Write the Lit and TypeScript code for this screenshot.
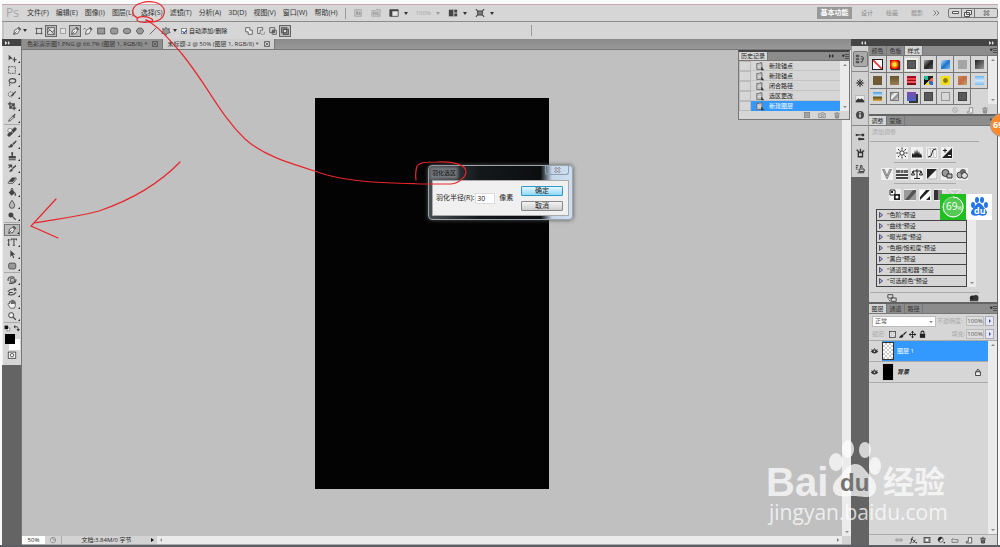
import { LitElement, html, svg, css, TemplateResult, SVGTemplateResult } from 'lit';
import { customElement, property, state } from 'lit/decorators.js';
import { classMap } from 'lit/directives/class-map.js';

// Glyphs share a 12 x 12 grid; "currentColor" lets the host set the ink.
const GLYPHS: Record<string, SVGTemplateResult> = {
  move: svg`<path d="M2 2v7l2-2h3z" fill="currentColor"/><path d="M9 5v6M6.500 8h5" stroke="currentColor" stroke-width="1.300"/>`,
  marquee: svg`<rect x="2" y="2" width="8" height="8" fill="none" stroke="currentColor" stroke-dasharray="2 1"/>`,
  lasso: svg`<ellipse cx="6.500" cy="4.500" rx="4" ry="2.600" fill="none" stroke="currentColor" stroke-width="1.300"/><path d="M3 6.500C2 8 4 8 3.500 9.500L2.500 11" fill="none" stroke="currentColor"/>`,
  quick: svg`<circle cx="4.500" cy="6.500" r="3" fill="none" stroke="currentColor" stroke-dasharray="1.500 1"/><path d="M10.500 2L7 5.500 4 8.500l3-.5 3.500-4z" fill="currentColor"/>`,
  crop: svg`<path d="M3.500 1v7.500H11M1 3.500h7.500V11M4 8l5-5" fill="none" stroke="currentColor" stroke-width="1.500"/>`,
  dropper: svg`<path d="M2 10l1-2.500 3.500-3.500 1.500 1.500L4.500 9z" fill="none" stroke="currentColor"/><path d="M6 3l3 3 1-1.500L8.500 4 10.500 1.500 9 1 7.500 3z" fill="currentColor"/>`,
  heal: svg`<path d="M2.500 9.500l7-7" stroke="currentColor" stroke-width="4" stroke-linecap="round"/><path d="M5 4.500L7.500 7" stroke="#ddd" stroke-width="1"/><circle cx="3.500" cy="4" r="2.500" fill="#eee" stroke="currentColor" stroke-width=".6"/>`,
  brush: svg`<path d="M11 1.500L6.500 5.500l1.300 1.600L11.500 3zM6 6C3.500 6 4 8.500 1 9.500c3 1.600 6 .5 6.300-2z" fill="currentColor"/>`,
  stamp: svg`<path d="M5 1.500h2.500L7 6h3.500v3H2V6h3.500zM2 10h8.500v1H2z" fill="currentColor"/>`,
  history: svg`<path d="M10.500 2L6 6l1 1.500L11 4zM6 7C4.500 7 4 9.500 2 10c2.500 1 5 0 5-2z" fill="currentColor"/><path d="M1.500 2.500h4v3M5 2.500L2 6" fill="none" stroke="currentColor" stroke-width="1.300"/>`,
  eraser: svg`<path d="M1.500 8L6 3h5L7 8.500z" fill="currentColor"/><path d="M1.500 8.500V10H7l4-5V3.500" fill="none" stroke="currentColor"/>`,
  bucket: svg`<path d="M2 6.500L6 3l4 4-4.500 3.500z" fill="currentColor"/><path d="M5 7V2.500Q6 0 7 2.500V5" fill="none" stroke="currentColor"/><path d="M10 7q2 3 0 3.500T10 7" fill="currentColor"/>`,
  blur: svg`<path d="M6 1.500Q2.500 6 2.800 8a3.200 3.200 0 0 0 6.400 0Q9.500 6 6 1.500z" fill="#b8b8b8" stroke="currentColor"/>`,
  dodge: svg`<circle cx="4.700" cy="4.700" r="3" fill="currentColor"/><path d="M7 7l3.500 3.500" stroke="currentColor" stroke-width="1.500"/>`,
  pen: svg`<path d="M2 10l1-5 4-2 2 2-2 4zM2 10l3.500-3.500" fill="#eee" stroke="currentColor"/><path d="M7.500 1.500l3 3" stroke="currentColor" stroke-width="2"/>`,
  freepen: svg`<path d="M3 10l1-5 4-2 1.500 2-2 4zM1 4q1-3 2 0" fill="#eee" stroke="currentColor"/><path d="M8 1.500l3 3" stroke="currentColor" stroke-width="1.500"/>`,
  type: svg`<path d="M5 2.500h6.500M8.300 2.500v7M7 10h2.500M5 2v2M11.500 2v2M2 3v7M1 4l1-1.500L3 4M1 9l1 1.500L3 9" fill="none" stroke="currentColor" stroke-width="1.200"/>`,
  select: svg`<path d="M4 1.500v8l2-2 1.500 3.500 1.200-.6L7.200 7H10z" fill="currentColor"/>`,
  rrect: svg`<rect x="2" y="2.500" width="8.500" height="7" rx="2" fill="#999" stroke="currentColor"/>`,
  rect: svg`<rect x="2" y="2.500" width="8.500" height="7" fill="#999" stroke="currentColor"/>`,
  ellipse: svg`<ellipse cx="6" cy="6" rx="4.500" ry="3.300" fill="#999" stroke="currentColor"/>`,
  polygon: svg`<path d="M4 2.500h4L10.500 6 8 9.500H4L1.500 6z" fill="#999" stroke="currentColor"/>`,
  line: svg`<path d="M2 10l8-8" stroke="currentColor"/>`,
  custom: svg`<path d="M6 1.500L8 4l2-1-.5 3 1.500 2-3 .5L6 11 4.500 8.500 1 9l1.500-3L2 3l2.500 1z" fill="#999" stroke="currentColor"/>`,
  orbit: svg`<rect x="4" y="4" width="5" height="4.500" rx="1" fill="#bbb" stroke="currentColor"/><path d="M1.500 7C0 3 5 1 9 3M10.500 5c1.500 4-4 6-8 4.500" fill="none" stroke="currentColor" stroke-width="1.300"/>`,
  roll: svg`<path d="M1 5.500Q5 1 10.500 3L9 1M10.500 3L8.500 4.500M11 6.500Q7 11 2 9l1-2.500h4" fill="none" stroke="currentColor" stroke-width="1.300"/>`,
  hand: svg`<path d="M3 6L2 5 1 6l3 5h5l1-3V3.500L8.500 3V6 2H7v4V1.500H5.500V6L4 2.500 3 3z" fill="#f0f0f0" stroke="currentColor" stroke-width=".9"/>`,
  zoom: svg`<circle cx="5" cy="5" r="3" fill="#eee" stroke="currentColor" stroke-width="1.200"/><path d="M7.300 7.300l3.200 3.200" stroke="currentColor" stroke-width="1.500"/>`,
  mask: svg`<rect x="1.500" y="2.500" width="9" height="7.500" fill="#eee" stroke="currentColor"/><circle cx="6" cy="6.200" r="2" fill="#fff" stroke="currentColor"/>`,
  shapeLayer: svg`<rect x="3" y="3" width="6" height="6" fill="none" stroke="currentColor"/><path d="M2 2h2v2H2zM8 2h2v2H8zM2 8h2v2H2zM8 8h2v2H8z" fill="currentColor"/>`,
  pathMode: svg`<rect x="2" y="2" width="8" height="8" fill="#ddd" stroke="currentColor"/><path d="M2 8q2-5 4-2t4-1M2 2l8 8" fill="none" stroke="currentColor"/>`,
  fillMode: svg`<rect x="3" y="3" width="6" height="6" fill="#e2e2e2" stroke="#999"/>`,
  union: svg`<path d="M2 2h5v3h3v5H5V7H2z" fill="#eee" stroke="currentColor"/>`,
  subtract: svg`<path d="M2 2h6v3H5v4H2z" fill="#eee" stroke="currentColor"/><path d="M6 10h4V6" fill="none" stroke="currentColor" stroke-dasharray="1 1"/>`,
  intersect: svg`<path d="M2 2h6v6H2zM5 5h5v5H5z" fill="none" stroke="currentColor"/><path d="M5 5h3v3H5z" fill="currentColor"/>`,
  exclude: svg`<path d="M2 2h6v6H2zM4 4h6v6H4z" fill="#aaa" stroke="currentColor" stroke-width="1.300"/><path d="M5 5h2v2H5z" fill="#fff"/>`,
  bridge: svg`<rect x="2" y="2" width="8" height="8" fill="#c4c4c4" stroke="#aaa"/><path d="M4 4h2v4H4zM7 5h2v3H7z" fill="#999"/>`,
  mini: svg`<path d="M1 3h4l1-1h5v8H1z" fill="#c4c4c4" stroke="#aaa"/><path d="M3 8V5l1.500 2L6 5v3M8 5v3h1.500" fill="none" stroke="#999"/>`,
  screen: svg`<path d="M1 2h10v8H1z" fill="#e6e6e6" stroke="currentColor"/><path d="M1 2h10v2H1zM1 2h3v8H1z" fill="currentColor"/>`,
  arrange: svg`<path d="M1 2h10v8H1z" fill="currentColor"/><path d="M7 2v8M7 6h4" stroke="#ddd"/>`,
  full: svg`<rect x="3" y="3.500" width="6" height="5" fill="#777" stroke="currentColor"/><path d="M1 1.500l2 2M11 1.500l-2 2M1 10.500l2-2M11 10.500l-2-2" stroke="currentColor" stroke-width="1.300"/>`,
  doc: svg`<path d="M1 2h3l1-1h3v9H1z" fill="#aaa" stroke="#666"/><path d="M2 4h5M2 6h5M2 8h5" stroke="#eee"/><path d="M7 6l4 5H7z" fill="#333"/>`,
  camera: svg`<path d="M1 4h3l1-1.500h3L9 4h2v6H1z" fill="#ccc" stroke="currentColor"/><circle cx="6.500" cy="6.700" r="1.700" fill="none" stroke="currentColor"/>`,
  trash: svg`<path d="M2 3.500h8M5 2h2M3.200 4.500l.6 6h4.400l.6-6M5 5v5M7 5v5" fill="none" stroke="currentColor" stroke-width="1.200"/>`,
  newdoc: svg`<path d="M2 10.500v-2h3v-6h5v8z" fill="#eee" stroke="currentColor"/>`,
  list: svg`<rect x="2" y="2" width="8" height="8" fill="#bbb" stroke="currentColor"/><path d="M3 4.500h6M3 7h6" stroke="currentColor"/>`,
  none: svg`<circle cx="6" cy="6" r="3.600" fill="none" stroke="#999"/><path d="M3.500 3.500l5 5" stroke="#999"/>`,
  histPanel: svg`<path d="M1 1h4v3H1zM1 5h4v2.500H1zM1 8.500h4V11H1z" fill="#555"/><path d="M7 3q4 0 3 3L8 10M6.500 9.500h2M7 6h3" fill="none" stroke="#333"/>`,
  wheel: svg`<circle cx="6" cy="6" r="2.600" fill="none" stroke="currentColor"/><path d="M6 1v10M1 6h10M2.500 2.500l7 7M9.500 2.500l-7 7" stroke="currentColor"/>`,
  picture: svg`<rect x="1" y="2" width="10" height="8" fill="#eee" stroke="#999" stroke-width=".6"/><path d="M1 8l3-3 2 1.500L8 5l3 3v2H1z" fill="currentColor"/>`,
  info: svg`<circle cx="6" cy="6" r="4.800" fill="#4a4a4a"/><path d="M6 5v4" stroke="#fff" stroke-width="1.500"/><circle cx="6" cy="3.200" r=".9" fill="#fff"/>`,
  brushes: svg`<path d="M1 3.500h8M4 8.500h7" stroke="currentColor" stroke-width="1.200"/><path d="M1 2l4 1.500L1 5zM8 2h3v3H8zM4 7h3v3H4zM7 7.500h4v2H7z" fill="currentColor"/>`,
  source: svg`<path d="M4 5.500h5v5H4zM5 5L2 2M6.500 5V1M8 5l3-2" fill="none" stroke="currentColor" stroke-width="1.600"/>`,
  clone: svg`<path d="M6.500 5V2h2v3M5 6h6v3H5zM3 10.500h8M1 2h3M1 4h2M1 6h2" fill="none" stroke="currentColor" stroke-width="1.100"/>`,
  bright: svg`<circle cx="6" cy="6" r="2.200" fill="#fff" stroke="#222"/><path d="M6 .5v2M6 9.500v2M.5 6h2M9.500 6h2M2 2l1.500 1.500M8.500 8.500L10 10M2 10l1.500-1.500M8.500 3.500L10 2" stroke="#222"/>`,
  levels: svg`<path d="M1 10V7l1-1 1 2 1-5 1 4 1-5 1 5 1-3 1 4 1-2 1 4z" fill="#222"/><path d="M1 10h10" stroke="#222"/>`,
  curves: svg`<path d="M1.500 1.500h9v9h-9zM4.500 1.500v9M7.500 1.500v9" fill="none" stroke="#bbb" stroke-width=".7"/><path d="M2 10q4 0 4-4t4-4" fill="none" stroke="#222"/>`,
  expo: svg`<path d="M11 1v10H1z" fill="#222"/><path d="M2 3.500h4M4 1.500v4" stroke="#222"/><path d="M7 8.500h3" stroke="#fff"/>`,
  vib: svg`<path d="M1.500 1.500h2L6 8l2.500-6.500h2L6 11z" fill="#bbb" stroke="#666" stroke-width=".7"/>`,
  hue: svg`<path d="M0 2h4v3H0zM4.500 2h3v3h-3zM8 2h4v3H8z" fill="#666"/><path d="M0 6h12v2H0zM0 9h12v2H0z" fill="#444"/>`,
  balance: svg`<path d="M6 1v9M3 10.500h6M2 3h8M2 3L.5 7h3zM10 3L8.500 7h3z" fill="none" stroke="#222"/>`,
  bw: svg`<path d="M1 1h10L1 11z" fill="#222"/><path d="M11 1v10H1" fill="none" stroke="#aaa"/>`,
  filter: svg`<circle cx="4.500" cy="5" r="3.500" fill="#999" stroke="#333"/><path d="M6 6h5v4H6z" fill="#bbb" stroke="#333"/>`,
  mixer: svg`<circle cx="4" cy="7" r="3" fill="#aaa" stroke="#444"/><circle cx="7" cy="4" r="3" fill="#666"/><circle cx="8.500" cy="7.500" r="3" fill="#ddd" stroke="#333"/>`,
  invert: svg`<path d="M1 1h5v5H1z" fill="#fff" stroke="#222"/><path d="M5 5h6v6H5zM2 2h2v2H2z" fill="#222"/><circle cx="8" cy="8" r="1.500" fill="#fff"/>`,
  poster: svg`<path d="M0 1h12v10H0z" fill="#999"/><path d="M1 11L9 1h3v2L5 11z" fill="#555"/>`,
  thresh: svg`<path d="M1 1h10v10H1z" fill="#fff"/><path d="M1 11V8l6-7h4zM7 11l4-4v4z" fill="#222"/>`,
  gmap: svg`<path d="M0 1h4v10H0z" fill="#333"/><path d="M4 1h4v10H4z" fill="#888"/><path d="M8 1h4v10H8z" fill="#ddd"/>`,
  selcol: svg`<path d="M0 1h12v10H0z" fill="#ccc"/><path d="M0 1l6 5 6-5M0 11l6-5 6 5" fill="none" stroke="#eee"/>`,
  eye: svg`<path d="M1 6q5-6 10 0-5 5-10 0z" fill="#333"/><circle cx="6" cy="5.500" r="1" fill="#eee"/><path d="M2 3l1 1M6 1.500V3M10 3L9 4" stroke="#333"/>`,
  lock: svg`<rect x="2.500" y="5" width="7" height="5.500" fill="#eee" stroke="#222" stroke-width="1.200"/><path d="M4 5V3.500a2 2 0 0 1 4 0V5" fill="none" stroke="#222" stroke-width="1.200"/>`,
  lockFull: svg`<rect x="2.500" y="5" width="7" height="5.500" fill="#222"/><path d="M4 5V3.500a2 2 0 0 1 4 0V5" fill="none" stroke="#222" stroke-width="1.400"/>`,
  lockPix: svg`<rect x="2" y="2" width="8" height="8" fill="#eee" stroke="#333"/><path d="M3 3h2v2H3zM7 3h2v2H7zM5 5h2v2H5zM3 7h2v2H3zM7 7h2v2H7z" fill="#bbb"/>`,
  cross: svg`<path d="M6 1.500v9M1.500 6h9" stroke="#222" stroke-width="1.200"/><path d="M4 3.500L6 1l2 2.500zM4 8.500L6 11l2-2.500zM3.500 4L1 6l2.500 2zM8.500 4L11 6 8.500 8z" fill="#222"/>`,
  link: svg`<path d="M5 4.500H2.500a1.500 1.500 0 0 0 0 3H5M7 4.500h2.500a1.500 1.500 0 0 1 0 3H7M4 6h4" fill="none" stroke="#777"/>`,
  half: svg`<circle cx="5.500" cy="5.500" r="3.800" fill="#eee" stroke="#222"/><path d="M2.800 8.200l5.400-5.400A3.800 3.800 0 0 0 2.800 8.200z" fill="#222"/><path d="M10 9h2v2h-2z" fill="#222"/>`,
  folder: svg`<path d="M1.500 9.500v-5h3l1 1h5v4z" fill="#ddd" stroke="#555"/>`,
  addmask: svg`<rect x="1.500" y="2" width="9" height="8" fill="#999" stroke="#333"/><circle cx="6" cy="6" r="2" fill="#fff"/>`,
  fx: svg`<path d="M1 11q2 1 2.500-3L4.500 3q.5-2 2-1.300M2.500 5H6M6 5.500l4 5M10 5.500l-4.500 5" fill="none" stroke="#222" stroke-width="1.200"/><path d="M10.500 9.500h1.500V11h-1.500z" fill="#222"/>`,
  swap: svg`<path d="M5 5h5v5H5z" fill="#fff" stroke="#555"/><path d="M1 1h6v6H1z" fill="#111"/>`,
  bend: svg`<path d="M2 3h5q2 0 2 5" fill="none" stroke="#333" stroke-width="1.400"/><path d="M4 0v6L1 3zM6 7h6l-3 4z" fill="#333"/>`,
  clip: svg`<circle cx="4" cy="6" r="3" fill="#222"/><circle cx="8" cy="6" r="3.500" fill="#333"/><path d="M1 8h10v2H1z" fill="#444"/>`,
  back: svg`<path d="M1 2h6v4H1zM5 6h6v4H5z" fill="#ddd" stroke="#333"/><path d="M2 8l2 2" stroke="#333"/>`,
  clock: svg`<circle cx="6" cy="6" r="4" fill="#ddd" stroke="#777"/><path d="M6 3v3h3" fill="none" stroke="#777"/>`,
};

@customElement('ps-icon')
class PsIcon extends LitElement {
  @property() name = '';
  static styles = css`
    :host { display: block; width: 10px; height: 10px; flex: none; }
    .glyph { display: block; width: 100%; height: 100%; }
  `;
  render() {
    return html`<svg class="glyph" viewBox="0 0 12 12" aria-hidden="true">${GLYPHS[this.name]}</svg>`;
  }
}

const MENUS = ['文件(F)', '编辑(E)', '图像(I)', '图层(L)', '选择(S)', '滤镜(T)', '分析(A)', '3D(D)', '视图(V)', '窗口(W)', '帮助(H)'];
const TOOL_GROUPS = [
  ['move', 'marquee', 'lasso', 'quick', 'crop', 'dropper'],
  ['heal', 'brush', 'stamp', 'history', 'eraser', 'bucket', 'blur', 'dodge'],
  ['pen', 'type', 'select', 'rrect'],
  ['orbit', 'roll', 'hand', 'zoom'],
];
const HISTORY = ['新建锚点', '新建锚点', '闭合路径', '选区更改', '新建图层'];
const PRESETS = ['色阶', '曲线', '曝光度', '色相/饱和度', '黑白', '通道混和器', '可选颜色'];
const STYLES = ['s-none', 's-sun', 's-gray s-on', 's-dark', 's-blue', 's-silver', 's-fade', 's-brown', 's-brown2', 's-red', 's-camo', 's-yellow', 's-rust', 's-sky', 's-land', 's-chrome', 's-violet', 's-gray', 's-line', 's-gray'];

@customElement('app-root')
class AppRoot extends LitElement {
  @state() private tool = 'pen';
  @state() private step = 4;

  static styles = css`
    * { box-sizing: border-box; }
    :host {
      display: block; position: relative; overflow: hidden; min-height: 100vh;
      font: 6px/8px "Open Sans", "Noto Sans CJK SC", sans-serif; color: #222;
    }
    button, input, select { font: inherit; color: inherit; margin: 0; padding: 0; border: 0; background: none; border-radius: 0; appearance: none; outline: none; }
    button { display: flex; align-items: center; justify-content: center; white-space: nowrap; }
    .app { display: flex; flex-direction: column; min-height: 100vh; padding: 4px 2px 0; border-bottom: 2px solid #5d5d68; background: #fbfafa; }
    .row { display: flex; align-items: center; }
    .grow { flex: 1; }
    .caret { width: 0; border: 2px solid transparent; border-top: 3px solid #333; border-bottom: 0; flex: none; }
    .pale { opacity: .35; }

    .menubar { height: 18px; padding: 0 0 0 4px; background: #d6d6d6; border-top: 1px solid #c9a9b0; border-bottom: 1px solid #8c8c8c; }
    .logo { font: 12px/16px "Open Sans", sans-serif; color: #a5a5a5; width: 21px; }
    .menus { display: flex; gap: 7px; margin-right: 7px; }
    .menus button { font-size: 7px; color: #333; }
    .vline { width: 1px; height: 11px; background: #999; flex: none; }
    .apps { gap: 8px; margin-left: 7px; color: #444; }
    .pair { gap: 5px; }
    .spaces { gap: 13px; color: #888; margin-right: 8px; }
    .spaces svg { margin-left: -3px; }
    .spaces .now { background: #999; color: #fff; font-weight: 700; height: 12px; width: 35px; margin-right: -4px; font-size: 7px; }
    .win { border: 1px solid #777; border-radius: 2px; height: 10px; }
    .win button { width: 13px; height: 8px; border-right: 1px solid #777; color: #555; }
    .win button:last-child { width: 22px; border: 0; }

    .options { height: 17px; padding: 0 9px 0 7px; background: #d6d6d6; color: #555; border-left: 2px solid #c4c4c4; border-right: 1px solid #999; }
    .kinds { margin-left: 6px; }
    .shapes { gap: 1px; }
    .rule { margin-left: 240px; }
    .opt { width: 12px; height: 12px; }
    .opt.on { background: #bcbcbc; border: 1px solid #666; }
    .check { display: flex; align-items: center; gap: 2px; margin: 0 16px 0 4px; color: #222; }
    .check input { width: 6px; height: 6px; background: #fff; border: 1px solid #888; display: grid; place-items: center; }
    .check input:checked::before { content: ""; width: 2px; height: 3px; border: solid #2352a0; border-width: 0 1px 1px 0; transform: rotate(40deg); }

    .work { flex: 1; display: grid; grid-template-columns: 20px 1fr 18px 129px; background: #646464; min-height: 0; }
    .dark { height: 7px; background: #444; color: #ddd; display: flex; align-items: center; padding: 0 3px; }
    .dark svg { width: 5px; height: 4px; display: block; }
    .dark.end { justify-content: flex-end; }

    .toolside { border-right: 1px solid #777; }
    .tools { background: #d6d6d6; padding: 6px 1px 4px; display: flex; flex-direction: column; height: 319px; border-left: 1px solid #eee; color: #444; }
    .group { border-bottom: 1px solid #aaa; margin-bottom: 1px; }
    .group:last-of-type { border-bottom-color: #d6d6d6; }
    .tool { width: 16px; height: 12px; position: relative; }
    .tool::after { content: ""; position: absolute; right: 0; bottom: 1px; border: 1px solid transparent; border-right-color: #222; border-bottom-color: #222; }
    .tool.on { background: #bbb; border: 1px solid #777; }
    .mini { justify-content: space-between; height: 9px; }
    .mini ps-icon { width: 7px; height: 7px; }
    .colors { height: 17px; padding: 1px 1px 0; display: grid; grid-template-columns: 10px 6px; }
    .fore { background: #000; width: 10px; height: 10px; z-index: 1; }
    .back { background: #fff; width: 11px; height: 11px; margin: 5px 0 0 -6px; }

    .docside { display: flex; flex-direction: column; min-width: 0; background: #c0c0c0; }
    .tabs { display: flex; height: 11px; background: linear-gradient(#8a8a8a, #999); border-bottom: 1px solid #777; padding-left: 1px; }
    .tab { padding: 0 4px; gap: 5px; color: #333; background: #8e8e8e; border-right: 1px solid #777; }
    .tab.on { background: #d0d0d0; }
    .tab svg { width: 6px; height: 6px; }
    .canvas { flex: 1; display: grid; grid-template-columns: 1fr 9px; }
    .stage { display: grid; place-items: center; }
    .sheet { width: 234px; height: 391px; background: #030303; }
    .bar { background: #ebebeb; display: flex; flex-direction: column; justify-content: space-between; align-items: center; padding: 3px 0; }
    .up, .down { width: 0; border: 2px solid transparent; }
    .up { border-bottom: 2px solid #888; border-top: 0; }
    .down { border-top: 2px solid #888; border-bottom: 0; }
    .status { height: 9px; background: #d3d3d3; border-bottom: 1px solid #aaa; }
    .status .zoomin { width: 23px; height: 8px; background: #fff; text-align: center; }
    .status ps-icon { width: 8px; height: 8px; margin: 0 4px; }
    .status .size { width: 90px; text-align: center; border-left: 1px solid #aaa; }
    .right { width: 0; border: 2px solid transparent; border-left: 3px solid #111; border-right: 0; }
    .left { width: 0; border: 2px solid transparent; border-right: 2px solid #999; border-left: 0; }
    .hbar { flex: 1; height: 8px; background: #ebebeb; margin: 0 9px 0 3px; display: flex; justify-content: space-between; align-items: center; padding: 0 3px; }
    .hbar .right { border-left: 2px solid #777; }

    .dock .icons { background: #d0d0d0; border: 1px solid #999; border-width: 0 1px; padding: 5px 0 4px; height: 131px; }
    .dock section { display: flex; flex-direction: column; align-items: center; gap: 3px; padding-bottom: 4px; border-bottom: 1px solid #888; margin-bottom: 4px; }
    .dock section:last-child { border: 0; margin: 0; padding: 0; }
    .dock button { width: 15px; height: 13px; color: #333; }
    .dock button.on { height: 16px; background: #aaa; border: 1px solid #777; border-radius: 2px; }

    .panels { display: flex; flex-direction: column; padding: 0 1px 0 0; gap: 2px; }
    .panels .dark { margin-bottom: -2px; }
    .panel { background: #d6d6d6; display: flex; flex-direction: column; }
    .ptabs { display: flex; height: 10px; background: #8c8c8c; border-bottom: 1px solid #777; align-items: stretch; }
    .ptabs button { width: 18px; color: #333; border-right: 1px solid #777; }
    .ptabs button.on { background: #d6d6d6; color: #222; }
    .ptabs .opts { width: 8px; border: 0; margin-left: auto; }
    .opts svg { width: 7px; height: 5px; }
    .swatches { display: grid; grid-template-columns: 1fr 9px; padding-left: 1px; }
    .grid { display: grid; grid-template-columns: repeat(7, 1fr); grid-auto-rows: 16px; }
    .cell { border: solid #777; border-width: 0 1px 1px 0; height: 17px; }
    .chip { width: 9px; height: 9px; display: block; }
    .s-none { background: linear-gradient(to top right, #fff 43%, #e33 45%, #e33 55%, #fff 57%); border: 1px solid #222; width: 11px; height: 11px; transform: scaleX(1); background: linear-gradient(to bottom left, #fff 43%, #e33 45%, #e33 55%, #fff 57%); }
    .s-sun { background: radial-gradient(#ffe640 20%, #f70 45%, #c00 75%); box-shadow: 1px 1px 1px #333; }
    .s-gray { background: #595959; border: 1px solid #444; }
    .s-on { box-shadow: 0 0 0 2px #eeeee4; }
    .s-dark { background: linear-gradient(135deg, #aaa, #222 50%, #555); }
    .s-blue { background: linear-gradient(135deg, #bfe0ff, #1d74c8 50%, #74b9f2); }
    .s-silver { background: #a5a5a5; }
    .s-fade { background: linear-gradient(135deg, #222, #999); }
    .s-brown { background: #6e5a35; }
    .s-brown2 { background: linear-gradient(#65502a, #9a8050); }
    .s-red { background: linear-gradient(#a01020 25%, #f43c48 25% 45%, #901018 45% 60%, #f0505a 60% 80%, #701018 80%); }
    .s-camo { background: conic-gradient(#222 15%, #e64 15% 30%, #2a6be0 30% 45%, #f4d31e 45% 62%, #111 62% 80%, #2b9 80%); }
    .s-yellow { background: radial-gradient(#8a7a10 30%, #f1df16 45%); }
    .s-rust { background: linear-gradient(135deg, #c58a40, #c9684c 50%, #b7b060); }
    .s-sky { background: linear-gradient(#6ab4f0, #cde6fa 50%, #7dbcf0); }
    .s-land { background: linear-gradient(#4a9be0, #cfe8fa 45%, #5a4a1c 55%, #e0a838); }
    .s-chrome { background: linear-gradient(135deg, #777, #fff 40%, #888 60%, #ddd); border: 1px solid #777; }
    .s-violet { background: linear-gradient(#7b4ea8, #4a62c4); box-shadow: 2px 2px 0 #333; }
    .s-line { border: 1px solid #999; }
    .pfoot { display: flex; height: 8px; justify-content: flex-end; gap: 7px; padding-right: 8px; color: #777; align-items: center; }
    .panel .pfoot { height: 10px; padding-top: 2px; }
    .pfoot ps-icon { width: 8px; height: 8px; }

    .adjust { padding: 2px 18px 0 1px; }
    .hint { color: #aaa; padding: 0 2px 5px; border-bottom: 1px solid #aaa; }
    .adj { display: flex; justify-content: center; gap: 3px; padding: 5px 0 3px; }
    .adj ps-icon { width: 12px; height: 12px; background: #f0f0f0; }
    .short { width: 62px; height: 1px; background: #aaa; margin: 0 auto; }
    .presets { display: grid; grid-template-columns: 1fr 9px; padding: 5px 3px 5px 6px; border-bottom: 1px solid #aaa; }
    .plist { list-style: none; margin: 0; padding: 0; border: 1px solid #444; border-bottom: 0; }
    .plist li { border-bottom: 1px solid #444; height: 11px; }
    .plist button { height: 10px; gap: 4px; padding-left: 2px; }
    .tri { width: 4px; height: 6px; display: block; }
    .afoot { display: flex; justify-content: space-between; padding: 0 18px; height: 9px; align-items: center; color: #333; }

    .layers { flex: 1; }
    .layers .set { height: 14px; padding: 0 3px; gap: 1px; color: #aaa; }
    .layers .set.low { height: 13px; border-bottom: 1px solid #aaa; }
    .locks { gap: 1px; margin-left: 1px; color: #222; }
    .locks ps-icon { width: 9px; height: 9px; }
    .sel { width: 64px; height: 11px; background: #fff; border: 1px solid #bbb; color: #555; padding-left: 2px; }
    .drop { position: relative; display: block; }
    .drop .down { position: absolute; right: 3px; top: 5px; }
    .set label { white-space: nowrap; }
    .num { width: 18px; height: 10px; border: 1px solid #bbb; color: #555; background: #ddd; text-align: center; }
    .step { width: 9px; height: 10px; border: 1px solid #aab; background: #e6e8f2; flex: none; }
    .step .right { border-left: 2px solid #3a55b0; }
    .stack { flex: 1; display: grid; grid-template-columns: 1fr 9px; }
    .layer { height: 21px; border-bottom: 1px solid #aaa; padding-left: 1px; width: 100%; justify-content: flex-start; }
    .layer ps-icon { width: 9px; height: 9px; margin-right: 3px; }
    .layer .pic { width: 12px; height: 18px; background: #000; border: 1px solid #ccc; }
    .layer.on .pic { background: repeating-conic-gradient(#ccc 0 25%, #fff 0 50%) 0 0/4px 4px; border: 1px solid #333; }
    .layer.on .rest { background: #3399ff; color: #fff; }
    .layer .rest { display: flex; align-items: center; gap: 3px; flex: 1; height: 100%; }
    .layer em { font-weight: 700; }
    .layer .lk { margin: 0 6px 0 auto; width: 8px; }
    .lfoot { display: flex; height: 11px; align-items: center; justify-content: flex-end; gap: 6px; padding-right: 10px; border-top: 1px solid #aaa; }
    .lfoot ps-icon { width: 8px; height: 8px; }

    .hist { position: absolute; left: 738px; top: 50px; width: 112px; background: #d6d6d6; border: 1px solid #777; border-top: 2px solid #444; }
    .hist .ptabs { height: 9px; }
    .hist .ptabs .on { width: 29px; }
    .hist .ffwd { display: grid; place-items: center; margin-left: auto; color: #333; width: 12px; }
    .hist .ffwd svg { width: 5px; height: 4px; }
    .hist .ptabs .opts { margin-left: 4px; }
    .hist .body { display: grid; grid-template-columns: 1fr 9px; height: 50px; overflow: hidden; }
    .steps { list-style: none; margin: 0; padding: 0; }
    .steps li { height: 10px; border-bottom: 1px solid #c4c4c4; display: grid; grid-template-columns: 12px 1fr; }
    .steps button { height: 10px; justify-content: flex-start; gap: 4px; padding-left: 5px; }
    .steps .on { background: #3399ff; color: #fff; }
    .box { border: 1px solid #bbb; }
    .steps ps-icon { width: 9px; height: 9px; }

    .dialog { position: absolute; left: 428px; top: 165px; width: 145px; border: 1px solid #9aa4ad; border-radius: 4px; padding: 0 3px 3px; background: linear-gradient(90deg, #4a4e52, #15181b 35%, #0c0e10 78%, #c5d6ea 86%, #cfdff2); box-shadow: 0 0 4px #555; }
    .dtitle { display: flex; height: 14px; justify-content: space-between; align-items: center; color: #111; }
    .dtitle span { background: #73777b; box-shadow: 0 0 3px 2px #73777b; }
    .dtitle button { width: 24px; height: 9px; border: 1px solid #8fa0b2; border-top: 0; border-radius: 0 0 3px 3px; align-self: flex-start; color: #555; }
    .dbody { display: flex; background: #f0f0f0; height: 36px; padding: 5px 5px 5px 3px; align-items: center; border: 1px solid #aaa; font-size: 7px; }
    .dbody input { width: 20px; height: 11px; background: #fff; border: 1px solid #ddd; margin: 0 4px 0 1px; padding-left: 1px; }
    .dbody span, .dbody label { white-space: nowrap; }
    .acts { display: flex; flex-direction: column; gap: 5px; margin-left: auto; }
    .acts button { width: 42px; height: 10px; border: 1px solid #888; border-radius: 1px; background: linear-gradient(#f4f4f4, #ccc); }
    .acts .ok { border-color: #2a9ac8; background: linear-gradient(#e4f6fd, #8fd8f4); }

    .marks { position: absolute; left: 0; top: 0; width: 1000px; height: 547px; pointer-events: none; }
    .t-wm { font: 700 40px "Liberation Sans", sans-serif; }
    .t-du { font: 700 24px "Liberation Sans", sans-serif; }
    .t-cn { font: 700 31px "Noto Sans CJK SC", sans-serif; }
    .t-url { font: 21px "Open Sans", sans-serif; }
    .t-pct { font: 10px "Open Sans", sans-serif; }
    .t-badge { font: 700 9px "Open Sans", sans-serif; }
    .t-sm { font: 6px "Open Sans", sans-serif; }
  `;

  private arrows(dir: 'l' | 'r') {
    const d = dir === 'r' ? 'M0 0l2.500 2L0 4zM3 0l2 2-2 2z' : 'M2 0L0 2l2 2zM5 0L3 2l2 2z';
    return html`<svg viewBox="0 0 5 4" aria-hidden="true"><path d=${d} fill="currentColor" /></svg>`;
  }

  private panelMenu(): TemplateResult {
    return html`<button class="opts" aria-label="面板菜单"><svg viewBox="0 0 7 5"><path d="M0 1h2.500L1.200 3zM3 .5h4M3 2.500h4M3 4.500h4" fill="#333" stroke="#333" stroke-width=".7" /></svg></button>`;
  }

  private tabs(names: string[], active: number) {
    return html`<div class="ptabs">${names.map((n, i) => html`<button class=${classMap({ on: i === active })}>${n}</button>`)}${this.panelMenu()}</div>`;
  }

  private opt(name: string, on = false) {
    return html`<button class=${classMap({ opt: true, on })} aria-label=${name}><ps-icon name=${name}></ps-icon></button>`;
  }

  private scroll() {
    return html`<div class="bar"><i class="up"></i><i class="down"></i></div>`;
  }

  private closeMark() {
    return html`<svg viewBox="0 0 6 6" aria-hidden="true"><path d="M.5.5h5v5h-5zM1.500 1.500l3 3M4.500 1.500l-3 3" fill="none" stroke="#444" stroke-width=".7" /></svg>`;
  }

  private renderTop() {
    return html`
      <header class="menubar row">
        <span class="logo">Ps</span>
        <nav class="menus">${MENUS.map((m) => html`<button>${m}</button>`)}</nav>
        <i class="vline"></i>
        <div class="apps row">
          <ps-icon name="bridge"></ps-icon><ps-icon name="mini"></ps-icon>
          <span class="row pair"><ps-icon name="screen"></ps-icon><i class="caret"></i></span>
          <span class="row pair pale">100%<i class="caret"></i></span>
          <span class="row pair"><ps-icon name="arrange"></ps-icon><i class="caret"></i></span>
          <span class="row pair"><ps-icon name="full"></ps-icon><i class="caret"></i></span>
        </div>
        <span class="grow"></span>
        <div class="spaces row">
          <button class="now">基本功能</button><button>设计</button><button>绘画</button><button>摄影</button>
          <svg width="7" height="6" viewBox="0 0 7 6"><path d="M.5.5L3 3 .5 5.500M3.500.5L6 3 3.500 5.500" fill="none" stroke="#777" /></svg>
        </div>
        <div class="win row">
          <button aria-label="最小化"><svg width="7" height="4"><path d="M.5.5h6v2h-6z" fill="#fff" stroke="#555" /></svg></button>
          <button aria-label="还原"><svg width="8" height="7"><path d="M2.500.5h5v4h-5zM.5 2.500h5v4h-5z" fill="#eee" stroke="#555" /></svg></button>
          <button aria-label="关闭"><svg width="7" height="6"><path d="M1 .5l5 5M6 .5l-5 5" stroke="#666" stroke-width="2" /><path d="M1 .5l5 5M6 .5l-5 5" stroke="#eee" stroke-width=".7" /></svg></button>
        </div>
      </header>
      <div class="options row">
        <div class="row">${this.opt('pen')}<i class="caret"></i></div>
        <div class="row kinds">${this.opt('shapeLayer')}${this.opt('pathMode', true)}${this.opt('fillMode')}</div>
        <div class="row shapes">${this.opt('pen', true)}${this.opt('freepen')}${['rect', 'rrect', 'ellipse', 'polygon', 'line', 'custom'].map((n) => this.opt(n))}<i class="caret"></i></div>
        <label class="check"><input type="checkbox" checked />自动添加/删除</label>
        <div class="row">${this.opt('union')}${this.opt('subtract')}${this.opt('intersect')}${this.opt('exclude', true)}</div>
        <i class="vline rule"></i>
      </div>`;
  }

  private renderTools() {
    return html`
      <aside class="toolside">
        <div class="dark">${this.arrows('r')}</div>
        <div class="tools">
          ${TOOL_GROUPS.map((g) => html`<div class="group">${g.map((t) => html`
            <button class=${classMap({ tool: true, on: t === this.tool })} aria-label=${t} @click=${() => (this.tool = t)}><ps-icon name=${t}></ps-icon></button>`)}</div>`)}
          <div class="row mini"><ps-icon name="swap"></ps-icon><ps-icon name="bend"></ps-icon></div>
          <div class="colors"><button class="fore" aria-label="前景色"></button><button class="back" aria-label="背景色"></button></div>
          <button aria-label="快速蒙版"><ps-icon name="mask"></ps-icon></button>
        </div>
      </aside>`;
  }

  private renderDocument() {
    return html`
      <main class="docside">
        <div class="tabs">
          <button class="tab">色彩演示图1.PNG @ 66.7% (图层 1, RGB/8) * ${this.closeMark()}</button>
          <button class="tab on">未标题-2 @ 50% (图层 1, RGB/8) * ${this.closeMark()}</button>
        </div>
        <div class="canvas"><div class="stage"><div class="sheet"></div></div>${this.scroll()}</div>
        <footer class="status row">
          <input class="zoomin" aria-label="缩放" value="50%" /><ps-icon name="clock"></ps-icon>
          <span class="size">文档:3.84M/0 字节</span><i class="right"></i>
          <div class="hbar"><i class="left"></i><i class="right"></i></div>
        </footer>
      </main>`;
  }

  private renderDock() {
    const groups = [['histPanel'], ['wheel', 'picture', 'info'], ['brushes', 'source', 'clone']];
    return html`
      <aside class="dock">
        <div class="dark end">${this.arrows('l')}</div>
        <div class="icons">${groups.map((g) => html`<section>${g.map((n) => html`<button class=${classMap({ on: n === 'histPanel' })} aria-label=${n}><ps-icon name=${n}></ps-icon></button>`)}</section>`)}</div>
      </aside>`;
  }

  private adjRow(names: string[]) {
    return html`<div class="adj">${names.map((n) => html`<ps-icon name=${n}></ps-icon>`)}</div>`;
  }

  private renderPanels() {
    return html`
      <aside class="panels">
        <div class="dark end">${this.arrows('r')}</div>
        <section class="panel">
          ${this.tabs(['颜色', '色板', '样式'], 2)}
          <div class="swatches">
            <div class="grid">${STYLES.map((s) => html`<button class="cell" aria-label="样式"><i class="chip ${s}"></i></button>`)}</div>
            ${this.scroll()}
          </div>
          <div class="pfoot"><ps-icon name="none"></ps-icon><ps-icon name="newdoc"></ps-icon><ps-icon name="trash"></ps-icon></div>
        </section>
        <section class="panel">
          ${this.tabs(['调整', '蒙版'], 0)}
          <div class="adjust">
            <div class="hint">添加调整</div>
            ${this.adjRow(['bright', 'levels', 'curves', 'expo'])}
            <div class="short"></div>
            ${this.adjRow(['vib', 'hue', 'balance', 'bw', 'filter', 'mixer'])}
            <div class="short"></div>
            ${this.adjRow(['invert', 'poster', 'thresh', 'gmap', 'selcol'])}
            <div class="presets">
              <ul class="plist">${PRESETS.map((p) => html`<li><button><svg class="tri" viewBox="0 0 4 6"><path d="M.5.5L3.500 3l-3 2.500z" fill="#aab4e8" stroke="#223" stroke-width=".7" /></svg>"${p}"预设</button></li>`)}</ul>
              ${this.scroll()}
            </div>
          </div>
          <div class="afoot"><ps-icon name="back"></ps-icon><ps-icon name="clip"></ps-icon></div>
        </section>
        <section class="panel layers">
          ${this.tabs(['图层', '通道', '路径'], 0)}
          <div class="set row">
            <span class="drop"><select class="sel" aria-label="混合模式"><option>正常</option></select><i class="down"></i></span>
            <label for="opacity">不透明度:</label><span class="grow"></span>
            <input id="opacity" class="num" value="100%" /><button class="step" aria-label="调整不透明度"><i class="right"></i></button>
          </div>
          <div class="set low row">
            <span>锁定:</span>
            <span class="row locks"><ps-icon name="lockPix"></ps-icon><ps-icon name="brush"></ps-icon><ps-icon name="cross"></ps-icon><ps-icon name="lockFull"></ps-icon></span>
            <span class="grow"></span><label for="fill">填充:</label>
            <input id="fill" class="num" value="100%" /><button class="step" aria-label="调整填充"><i class="right"></i></button>
          </div>
          <div class="stack">
            <div>
              <button class="layer on"><ps-icon name="eye"></ps-icon><span class="rest"><i class="pic"></i>图层 1</span></button>
              <button class="layer"><ps-icon name="eye"></ps-icon><span class="rest"><i class="pic"></i><em>背景</em><ps-icon class="lk" name="lock"></ps-icon></span></button>
            </div>
            ${this.scroll()}
          </div>
          <div class="lfoot">${['link', 'fx', 'addmask', 'half', 'folder', 'newdoc', 'trash'].map((n) => html`<ps-icon name=${n}></ps-icon>`)}</div>
        </section>
      </aside>`;
  }

  private renderHistory() {
    return html`
      <section class="hist">
        <div class="ptabs"><button class="on">历史记录</button><span class="ffwd">${this.arrows('r')}</span>${this.panelMenu()}</div>
        <div class="body">
          <ol class="steps">${HISTORY.map((h, i) => html`<li><i class="box"></i><button class=${classMap({ on: i === this.step })} @click=${() => (this.step = i)}><ps-icon name="doc"></ps-icon>${h}</button></li>`)}</ol>
          ${this.scroll()}
        </div>
        <div class="pfoot"><ps-icon name="list"></ps-icon><ps-icon name="camera"></ps-icon><ps-icon name="trash"></ps-icon></div>
      </section>`;
  }

  private renderDialog() {
    return html`
      <form class="dialog" @submit=${(e: Event) => e.preventDefault()}>
        <div class="dtitle"><span>羽化选区</span><button type="button" aria-label="关闭"><svg width="7" height="6"><path d="M1 .5l5 5M6 .5l-5 5" stroke="#667" stroke-width="2" /><path d="M1 .5l5 5M6 .5l-5 5" stroke="#fff" /></svg></button></div>
        <div class="dbody">
          <label for="radius">羽化半径(R):</label><input id="radius" value="30" /><span>像素</span>
          <div class="acts"><button class="ok">确定</button><button type="button">取消</button></div>
        </div>
      </form>`;
  }

  private renderMarks() {
    return html`
      <svg class="marks" viewBox="0 0 1000 547" aria-hidden="true">
        <rect x="940" y="194" width="26" height="26" fill="#1fbf1f" />
        <circle cx="953" cy="207" r="10" fill="#54c954" stroke="#8fdf8f" stroke-width="1" />
        <path d="M953 197a10 10 0 1 1-9 6" fill="none" stroke="#fff" stroke-width="1" />
        <text class="t-pct" x="946" y="210" fill="#fff">69</text><text class="t-sm" x="957" y="210" fill="#fff">%</text>
        <rect x="966" y="194" width="26" height="26" rx="1" fill="#fff" />
        <g fill="#2374e8"><ellipse cx="973" cy="205" rx="2" ry="3" /><ellipse cx="977" cy="200" rx="2" ry="3" /><ellipse cx="982" cy="200" rx="2" ry="3" /><ellipse cx="986" cy="205" rx="2" ry="3" /><path d="M979 203c3 0 4 4 7 7 3 4-1 7-7 5-6 2-10-1-7-5 3-3 4-7 7-7z" /></g>
        <text class="t-badge" x="974" y="214" fill="#fff">du</text>
        <circle cx="1002" cy="125" r="11.500" fill="#ff8a2c" stroke="#999" />
        <text class="t-badge" x="993" y="128" fill="#fff">69</text>

        <g fill="none" stroke="#e8262c" stroke-width="1.200" stroke-linecap="round">
          <path d="M138 18c-8-3-7-12 3-15 9-3 20-1 23 6 2 8-5 13-14 13-7 1-14 0-13-3 1-3 9-3 13-1 5 2 3 5-4 2" />
          <path d="M146 20C158 26 168 38 182 54c26 32 38 61 63 85 20 18 48 25 82 36 30 8 62 8 98 9h26c9-1 15-8 15-12 0-8-15-11-29-10-9 0-17 0-20 4q-2 6-1 14" />
          <path d="M180 162c-24 25-52 39-81 49-22 6-43 8-65 12M56 199L31 226l27 12" />
        </g>

        <g fill="#fff" opacity=".72">
          <text class="t-wm" x="766" y="496">Bai</text>
          <ellipse cx="836" cy="462" rx="7" ry="9" /><ellipse cx="848" cy="449" rx="6" ry="9" /><ellipse cx="865" cy="450" rx="6" ry="8" /><ellipse cx="875" cy="466" rx="6" ry="9" />
          <path d="M855 464c8 0 11 8 17 14 7 7 5 19-5 19-7 0-10-1-14-1-5 0-8 1-13 0-9-1-9-12-2-18 6-5 9-14 17-14z" />
          <text class="t-cn" x="883" y="493">经验</text>
          <text class="t-url" x="769" y="520">jingyan.baidu.com</text>
        </g>
        <text class="t-du" x="840" y="491" fill="#737373">du</text>
      </svg>`;
  }

  render() {
    return html`
      <div class="app">
        ${this.renderTop()}
        <div class="work">${this.renderTools()}${this.renderDocument()}${this.renderDock()}${this.renderPanels()}</div>
      </div>
      ${this.renderHistory()}${this.renderDialog()}${this.renderMarks()}`;
  }
}
